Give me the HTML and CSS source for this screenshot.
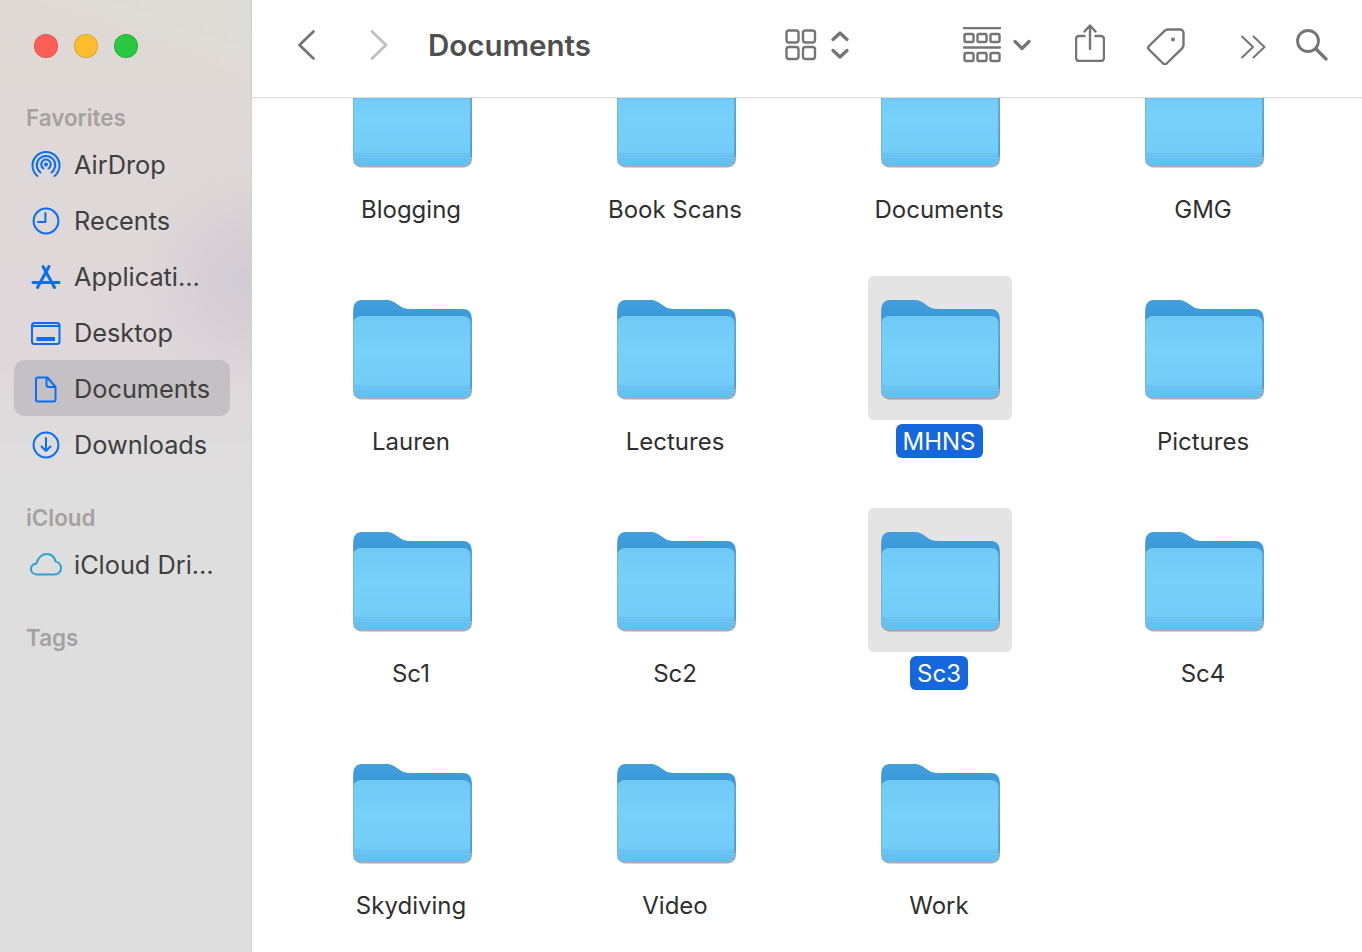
FILE: index.html
```html
<!DOCTYPE html>
<html lang="en">
  <head>
    <meta charset="UTF-8" />
    <title>Documents</title>
    <link rel="stylesheet" href="styles.css">
  </head>
  <body>
    <svg class="defs" width="0" height="0">
      <defs>
        <linearGradient id="folder-back" x1="0" y1="0" x2="0" y2="1">
          <stop offset="0" stop-color="#439fdc" />
          <stop offset="1" stop-color="#1583cf" />
        </linearGradient>
        <linearGradient id="folder-front" x1="0" y1="0" x2="0" y2="1">
          <stop offset="0" stop-color="#70caf5" />
          <stop offset="0.4" stop-color="#76d0fa" />
          <stop offset="1" stop-color="#73ccf7" />
        </linearGradient>
        <symbol id="folder" viewBox="0 0 120 104">
          <path d="M1 92V12a8 8 0 0 1 8-8h24c6 0 9 2 13 5 4 3 7 4 12 4h54a8 8 0 0 1 8 8v72a8 8 0 0 1-8 8H9a8 8 0 0 1-8-8z" fill="#7d7368" opacity="0.6" transform="translate(0 1.4)" />
          <path d="M1.500 92V11a8 8 0 0 1 8-8h24c6 0 9 2 13 5 4 3 7 4 12 4h53a8 8 0 0 1 8 8v72z" fill="url(#folder-back)" />
          <rect x="1.500" y="19" width="117" height="82" rx="7" fill="url(#folder-front)" />
          <path d="M1.500 88h117v6a7 7 0 0 1-7 7H8.500a7 7 0 0 1-7-7z" fill="#66c0ef" />
          <path d="M1.500 89.500h117M1.500 92.500h117" stroke="#78cdf7" stroke-width="1" opacity="0.7" />
        </symbol>
      </defs>
    </svg>

    <div class="window">
      <aside class="sidebar">
        <div class="traffic">
          <span class="light red"></span>
          <span class="light yellow"></span>
          <span class="light green"></span>
        </div>

        <h2 class="heading first">Favorites</h2>
        <ul class="places">
          <li class="place">
            <svg class="place-icon" viewBox="0 0 32 32"><path d="M7.500 27a13.500 13.500 0 1 1 17 0M10.500 23.500a9.200 9.200 0 1 1 11 0M13.500 19.500a4.800 4.800 0 1 1 5 0" /><circle class="solid" cx="16" cy="15.500" r="2" /></svg>
            AirDrop
          </li>
          <li class="place">
            <svg class="place-icon" viewBox="0 0 32 32"><circle cx="16" cy="16" r="12.400" /><path d="M15.400 8v9H8" /></svg>
            Recents
          </li>
          <li class="place">
            <svg class="place-icon" viewBox="0 0 32 32"><path class="thick" d="M13 5.500l11.500 21M19 5.500L7.500 26.500M3 21.500h26" /></svg>
            Applicati…
          </li>
          <li class="place">
            <svg class="place-icon" viewBox="0 0 32 32"><rect x="2" y="6" width="27.500" height="21" rx="2.500" /><path d="M2 9h27.500" /><rect class="solid" x="6.500" y="20" width="18.500" height="4" /></svg>
            Desktop
          </li>
          <li class="place selected">
            <svg class="place-icon" viewBox="0 0 32 32"><path d="M8 4.500h9.500l8 9.500v12.500a2 2 0 0 1-2 2H8a2 2 0 0 1-2-2v-20a2 2 0 0 1 2-2zM16.500 4.500v7a2.500 2.500 0 0 0 2.500 2.500h6.500" /></svg>
            Documents
          </li>
          <li class="place">
            <svg class="place-icon" viewBox="0 0 32 32"><circle cx="16" cy="16" r="12.400" /><path d="M16 9v13M11.500 17.500L16 22l4.500-4.500" /></svg>
            Downloads
          </li>
        </ul>

        <h2 class="heading">iCloud</h2>
        <ul class="places">
          <li class="place">
            <svg class="place-icon cloud" viewBox="0 0 32 32"><path d="M7.500 25.500C3.500 25.500 1 23 1 20c0-3 2.300-5.300 5.500-5.500C7.500 9.500 11.500 5 16.500 5c4.500 0 8 3 9 7.500 3.300.5 5.500 3.500 5.500 6.500 0 3.600-2.700 6.500-6.500 6.500z" /></svg>
            iCloud Dri…
          </li>
        </ul>

        <h2 class="heading">Tags</h2>
      </aside>

      <div class="finder">
        <header class="toolbar">
          <svg class="tool back" viewBox="0 0 20 32"><path d="M16.500 2.500L2.500 16l14 13.500" /></svg>
          <svg class="tool forward" viewBox="0 0 20 32"><path d="M3 2.500L17 16 3 29.500" /></svg>
          <h1 class="title">Documents</h1>
          <svg class="tool view" viewBox="0 0 32 32"><rect x="1.500" y="1.500" width="12" height="12" rx="2.500" /><rect x="18" y="1.500" width="12" height="12" rx="2.500" /><rect x="1.500" y="18" width="12" height="12" rx="2.500" /><rect x="18" y="18" width="12" height="12" rx="2.500" /></svg>
          <svg class="tool updown" viewBox="0 0 18 32"><path class="thick" d="M2 10.500L9 4l7 6.500M2 21.500L9 28l7-6.500" /></svg>
          <svg class="tool group" viewBox="0 0 38 36"><path d="M1 1h36M1 20.500h36" /><rect x="1.500" y="7" width="9" height="8" rx="1.500" /><rect x="14.500" y="7" width="9" height="8" rx="1.500" /><rect x="27.500" y="7" width="9" height="8" rx="1.500" /><rect x="1.500" y="26" width="9" height="8" rx="1.500" /><rect x="14.500" y="26" width="9" height="8" rx="1.500" /><rect x="27.500" y="26" width="9" height="8" rx="1.500" /></svg>
          <svg class="tool caret" viewBox="0 0 18 12"><path class="thick" d="M2 2.500l7 7 7-7" /></svg>
          <svg class="tool share" viewBox="0 0 30 38"><path d="M9.500 12H4a3 3 0 0 0-3 3v19a3 3 0 0 0 3 3h22a3 3 0 0 0 3-3V15a3 3 0 0 0-3-3h-5.500M15 25V2M9.500 7.500L15 1.500l5.500 6" /></svg>
          <svg class="tool tag" viewBox="0 0 38 38"><path d="M21 2.500h12a3.500 3.500 0 0 1 3.500 3.500v12c0 1.300-.5 2.400-1.400 3.300L19.600 36.500a2.500 2.500 0 0 1-3.500 0L2 22.500a2.500 2.500 0 0 1 0-3.500L17.600 3.900C18.500 3 19.700 2.500 21 2.500z" /><circle class="solid" cx="26" cy="12.500" r="2" /></svg>
          <svg class="tool more" viewBox="0 0 26 24"><path d="M2 1.500l11 10.500L2 22.500M13.500 1.500L24.500 12 13.500 22.500" /></svg>
          <svg class="tool search" viewBox="0 0 32 32"><circle cx="12" cy="12" r="10.500" /><path class="thick" d="M20 20l10 10" /></svg>
        </header>

        <main class="files">
          <div class="grid">
            <div class="item"><div class="thumb"><svg class="folder"><use href="#folder" /></svg></div><span class="name">Blogging</span></div>
            <div class="item"><div class="thumb"><svg class="folder"><use href="#folder" /></svg></div><span class="name">Book Scans</span></div>
            <div class="item"><div class="thumb"><svg class="folder"><use href="#folder" /></svg></div><span class="name">Documents</span></div>
            <div class="item"><div class="thumb"><svg class="folder"><use href="#folder" /></svg></div><span class="name">GMG</span></div>
            <div class="item"><div class="thumb"><svg class="folder"><use href="#folder" /></svg></div><span class="name">Lauren</span></div>
            <div class="item"><div class="thumb"><svg class="folder"><use href="#folder" /></svg></div><span class="name">Lectures</span></div>
            <div class="item active"><div class="thumb"><svg class="folder"><use href="#folder" /></svg></div><span class="name">MHNS</span></div>
            <div class="item"><div class="thumb"><svg class="folder"><use href="#folder" /></svg></div><span class="name">Pictures</span></div>
            <div class="item"><div class="thumb"><svg class="folder"><use href="#folder" /></svg></div><span class="name">Sc1</span></div>
            <div class="item"><div class="thumb"><svg class="folder"><use href="#folder" /></svg></div><span class="name">Sc2</span></div>
            <div class="item active"><div class="thumb"><svg class="folder"><use href="#folder" /></svg></div><span class="name">Sc3</span></div>
            <div class="item"><div class="thumb"><svg class="folder"><use href="#folder" /></svg></div><span class="name">Sc4</span></div>
            <div class="item"><div class="thumb"><svg class="folder"><use href="#folder" /></svg></div><span class="name">Skydiving</span></div>
            <div class="item"><div class="thumb"><svg class="folder"><use href="#folder" /></svg></div><span class="name">Video</span></div>
            <div class="item"><div class="thumb"><svg class="folder"><use href="#folder" /></svg></div><span class="name">Work</span></div>
          </div>
        </main>
      </div>
    </div>
  </body>
</html>
```

FILE: styles.css
```css
* {
  box-sizing: border-box;
  margin: 0;
  padding: 0;
}

html,
body {
  height: 100%;
  overflow: hidden;
}

body {
  font-family: Inter, "Liberation Sans", sans-serif;
  background: #fff;
  color: #3e3e3e;
}

.defs {
  position: absolute;
}

.window {
  display: flex;
  height: 100%;
}

/* sidebar */
.sidebar {
  width: 252px;
  flex-shrink: 0;
  padding-top: 34px;
  border-right: 1px solid #d2d2d2;
  background:
    radial-gradient(circle at 100% 280px, #d0cbd3 0, rgba(208, 203, 211, 0) 110px),
    linear-gradient(200deg, #dcdcd6 0, rgba(220, 220, 214, 0) 90px),
    linear-gradient(180deg, #dfd9d5 0, #dfd7da 340px, #dedede 500px);
}

.traffic {
  display: flex;
  gap: 16px;
  padding-left: 34px;
}

.light {
  width: 24px;
  height: 24px;
  border-radius: 50%;
  border: 1px solid rgba(0, 0, 0, 0.12);
}

.red {
  background: #ff5f57;
}

.yellow {
  background: #ffbc2e;
}

.green {
  background: #2ac840;
}

.heading {
  height: 38px;
  line-height: 40px;
  margin-top: 26px;
  padding-left: 26px;
  font-size: 22.400px;
  font-weight: 600;
  color: #a4a1a1;
}

.heading.first {
  margin-top: 40px;
}

.places {
  list-style: none;
}

.place {
  display: flex;
  align-items: center;
  gap: 12px;
  width: 216px;
  height: 56px;
  margin-left: 14px;
  padding-left: 16px;
  border-radius: 10px;
  font-size: 25.300px;
  color: #3f3f3f;
}

.place.selected {
  background: #c5c0c4;
}

.place-icon {
  width: 32px;
  height: 32px;
  margin-top: 2px;
  flex-shrink: 0;
  fill: none;
  stroke: #0a6ef2;
  stroke-width: 2;
  stroke-linecap: round;
  stroke-linejoin: round;
}

.place-icon .solid {
  fill: #0a6ef2;
  stroke: none;
}

.place-icon .thick {
  stroke-width: 3;
}

.place-icon.cloud {
  stroke: #2ea0d2;
}

/* toolbar */
.finder {
  flex: 1;
  display: flex;
  flex-direction: column;
  min-width: 0;
}

.toolbar {
  display: flex;
  align-items: center;
  flex-shrink: 0;
  height: 98px;
  padding-bottom: 7px;
  border-bottom: 1px solid #dedede;
  box-shadow: 0 1px 2px rgba(0, 0, 0, 0.05);
  position: relative;
  z-index: 1;
  background: #fff;
}

.title {
  width: 357px;
  margin-left: 39px;
  font-size: 29.500px;
  font-weight: 600;
  color: #4f4f4f;
}

.tool {
  flex-shrink: 0;
  fill: none;
  stroke: #757575;
  stroke-width: 2.400;
  stroke-linecap: round;
  stroke-linejoin: round;
}

.tool .thick {
  stroke-width: 3.200;
}

.tool .solid {
  fill: #757575;
  stroke: none;
}

.back {
  width: 20px;
  height: 32px;
  margin-left: 45px;
  stroke-width: 2.800;
}

.forward {
  width: 20px;
  height: 32px;
  margin-left: 52px;
  stroke: #c0c0c0;
  stroke-width: 2.800;
}

.view {
  width: 32px;
  height: 32px;
}

.updown {
  width: 18px;
  height: 32px;
  margin-left: 14px;
}

.group {
  width: 38px;
  height: 36px;
  margin-left: 114px;
}

.caret {
  width: 18px;
  height: 12px;
  margin-left: 12px;
}

.share {
  width: 30px;
  height: 38px;
  margin-left: 44px;
  margin-top: -4px;
}

.tag {
  width: 38px;
  height: 38px;
  margin-left: 42px;
  margin-top: 2px;
}

.more {
  width: 26px;
  height: 24px;
  margin-left: 55px;
  margin-top: 3px;
  stroke-width: 2;
}

.search {
  width: 32px;
  height: 32px;
  margin-left: 30px;
  stroke-width: 2.800;
}

/* folder grid */
.files {
  flex: 1;
  overflow: hidden;
  padding-left: 27px;
}

.grid {
  display: grid;
  grid-template-columns: repeat(4, 264px);
  grid-auto-rows: 232px;
  margin-top: -54px;
}

.item {
  display: flex;
  flex-direction: column;
  align-items: center;
}

.thumb {
  width: 144px;
  height: 144px;
  margin-left: 2px;
  padding: 21px 0 0 12px;
  border-radius: 6px;
}

.folder {
  display: block;
  width: 120px;
  height: 104px;
}

.name {
  height: 34px;
  line-height: 36px;
  margin-top: 4px;
  padding: 0 7px;
  border-radius: 6px;
  font-size: 24px;
  color: #2f2f2f;
}

.active .thumb {
  background: #e4e4e4;
}

.active .name {
  background: #1467dd;
  color: #fff;
}
```
